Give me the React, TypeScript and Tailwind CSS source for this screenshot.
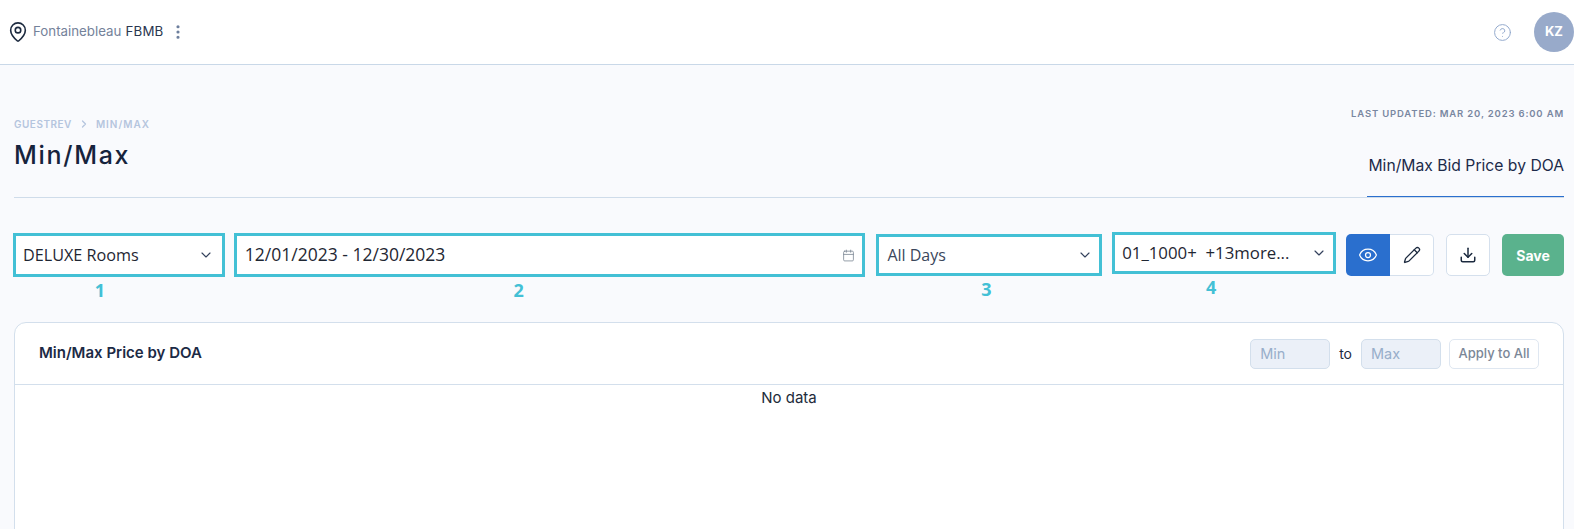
import { Calendar, ChevronDown, ChevronRight, CircleHelp, Download, Eye, MapPin, MoreVertical, Pencil } from "lucide-react";

const brand = "font-['Inter',sans-serif]";
const field = "font-['Open_Sans',sans-serif]";

const FilterBox = ({
  label,
  number,
  className,
  boxClass,
  textClass = "text-[16.2px] text-[#1f2733]",
  numberClass,
  icon = "chevron",
}: {
  label: string;
  number: string;
  className: string;
  boxClass: string;
  textClass?: string;
  numberClass: string;
  icon?: "chevron" | "calendar";
}) => (
  <div className={`flex flex-col items-center ${className}`}>
    <div className={`flex w-full items-center justify-between border-[3px] border-[#43c0d5] bg-white ${boxClass}`}>
      <span className={`${field} leading-none whitespace-pre ${textClass}`}>{label}</span>
      {icon === "chevron" ? (
        <ChevronDown size={16} strokeWidth={1.75} className="text-[#33415c]" />
      ) : (
        <Calendar size={13} strokeWidth={1.5} className="text-[#7d8794]" />
      )}
    </div>
    <span className={`${field} mt-[1px] text-[18px] leading-[24px] font-bold text-[#43c0d5] ${numberClass}`}>{number}</span>
  </div>
);

export default function App() {
  return (
    <div className={`${brand} h-[529px] overflow-hidden bg-[#f9fafd]`}>
      {/* Top bar */}
      <header className="flex h-[65px] items-center justify-between border-b border-[#c9d8e8] bg-white pl-[7px]">
        <div className="flex items-center">
          <MapPin size={22} strokeWidth={1.75} className="text-[#1c2a3f]" />
          <span className="ml-[4px] text-[13.3px] text-[#74829a]">Fontainebleau</span>
          <span className="ml-[4px] text-[13.3px] tracking-[0.2px] text-[#2a3650]">FBMB</span>
          <MoreVertical size={18} strokeWidth={2.25} className="ml-[5px] text-[#6d7f9d]" />
        </div>
        <div className="flex items-center">
          <CircleHelp size={19} strokeWidth={1.25} className="text-[#93a9cc]" />
          <div className="ml-[22px] flex h-[40px] w-[40px] items-center justify-center rounded-full bg-[#98aaca] text-[13px] font-bold text-white">
            KZ
          </div>
        </div>
      </header>

      <main className="pr-[10px] pl-[14px]">
        {/* Page heading */}
        <div className="flex h-[133px] items-start justify-between border-b border-[#cfdcea]">
          <div className="pt-[52px]">
            <div className="flex items-center text-[10px] leading-[14px] font-semibold text-[#b5c5de]">
              <span className="tracking-[0.5px]">GUESTREV</span>
              <ChevronRight size={12} strokeWidth={2.5} className="mx-[6px]" />
              <span className="tracking-[1px]">MIN/MAX</span>
            </div>
            <h1 className="mt-[8px] text-[25px] leading-[32px] font-medium tracking-[1.7px] text-[#16233c]">Min/Max</h1>
          </div>
          <div className="flex h-full flex-col items-end">
            <div className="pt-[42px] text-[9.5px] leading-[14px] font-semibold tracking-[0.83px] text-[#7987a1]">
              LAST UPDATED: MAR 20, 2023 6:00 AM
            </div>
            <div className="mt-auto border-b border-[#2b6fce] pb-[20px] pl-[1px] text-[15.7px] leading-[20px] text-[#1c2a4a]">
              Min/Max Bid Price by DOA
            </div>
          </div>
        </div>

        {/* Filters */}
        <div className="mt-[34px] flex items-start">
          <FilterBox
            label="DELUXE Rooms"
            number="1"
            className="mt-[1px] -ml-[1px] w-[212px]"
            boxClass="h-[44px] pr-[8px] pl-[7px]"
            numberClass="mr-[38px]"
          />
          <FilterBox
            label="12/01/2023 - 12/30/2023"
            number="2"
            className="mt-[1px] ml-[9px] w-[632px]"
            boxClass="h-[44px] pr-[7px] pl-[8px]"
            textClass="text-[17.5px] text-[#1f2733]"
            numberClass="mr-[62px]"
            icon="calendar"
          />
          <FilterBox
            label="All Days"
            number="3"
            className="mt-[2px] ml-[11px] w-[226px]"
            boxClass="h-[42px] pr-[6px] pl-[8px]"
            textClass="text-[16px] text-[#3b475c]"
            numberClass="mr-[6px]"
          />
          <FilterBox
            label="01_1000+  +13more..."
            number="4"
            className="ml-[10px] w-[224px]"
            boxClass="h-[42px] pr-[6px] pl-[7px]"
            textClass="text-[16.8px] text-[#1f2733]"
            numberClass="mr-[26px]"
          />

          <div className="mt-[2px] ml-[10px] flex h-[42px]">
            <button className="flex w-[44px] items-center justify-center rounded-l-[5px] bg-[#2a6fce] text-white">
              <Eye size={20} strokeWidth={1.5} />
            </button>
            <button className="flex w-[44px] items-center justify-center rounded-r-[5px] border border-l-0 border-[#d5e0ed] bg-white text-[#1c2a3f]">
              <Pencil size={18} strokeWidth={1.75} />
            </button>
          </div>
          <button className="mt-[2px] ml-[12px] flex h-[42px] w-[44px] items-center justify-center rounded-[5px] border border-[#d5e0ed] bg-white text-[#1c2a3f]">
            <Download size={18} strokeWidth={2} />
          </button>
          <button className="mt-[2px] ml-[12px] h-[42px] w-[62px] rounded-[5px] bg-[#5ab28d] text-[14px] font-bold text-white">
            Save
          </button>
        </div>

        {/* Table card */}
        <section className="mt-[20px] h-[260px] rounded-t-[12px] border border-[#d3dfec] bg-white">
          <div className="flex h-[62px] items-center justify-between border-b border-[#d3dfec] px-[24px]">
            <h2 className="text-[15px] font-semibold text-[#1c2a45]">Min/Max Price by DOA</h2>
            <div className="flex items-center">
              <div className="flex h-[30px] w-[80px] items-center rounded-[5px] border border-[#d3dfec] bg-[#ebf0f8] pl-[9px] text-[14.5px] text-[#98aeca]">
                Min
              </div>
              <span className="mx-[9px] text-[14px] text-[#1c2a3f]">to</span>
              <div className="flex h-[30px] w-[80px] items-center rounded-[5px] border border-[#d3dfec] bg-[#ebf0f8] pl-[9px] text-[14.5px] text-[#98aeca]">
                Max
              </div>
              <button className="ml-[8px] h-[30px] w-[90px] rounded-[5px] border border-[#dfe7f1] bg-white text-[13px] font-medium text-[#7b8797]">
                Apply to All
              </button>
            </div>
          </div>
          <p className="text-center text-[15px] leading-[25px] text-[#222b3a]">No data</p>
        </section>
      </main>
    </div>
  );
}
